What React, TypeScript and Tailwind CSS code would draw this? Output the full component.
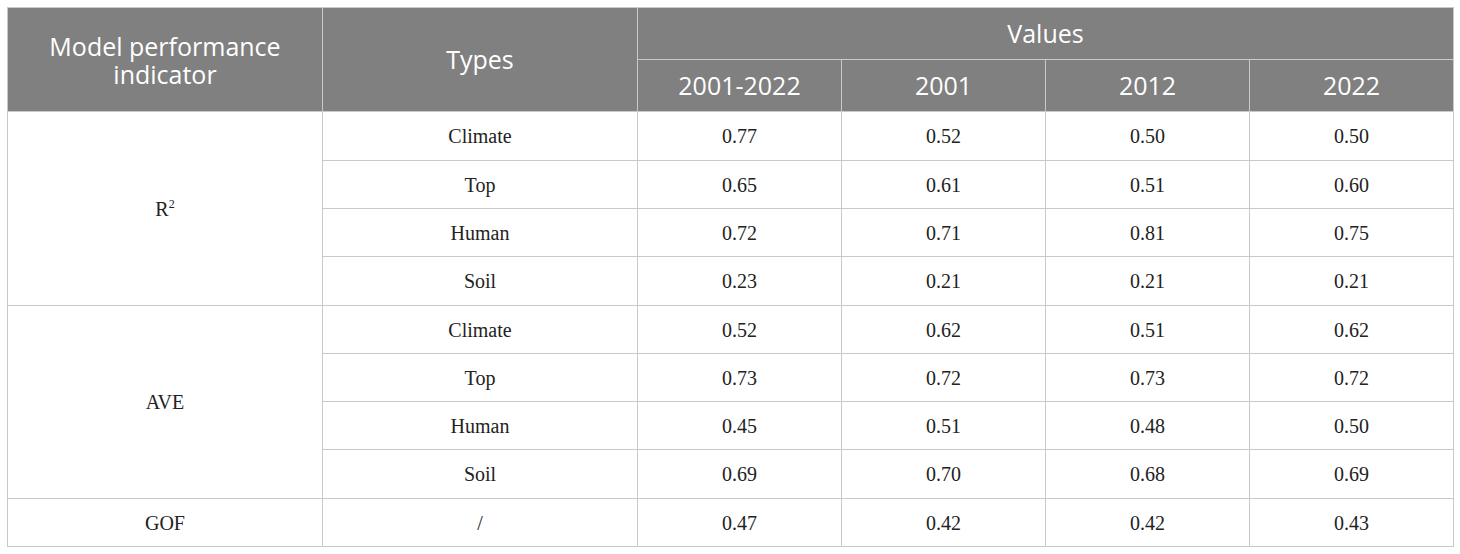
const head = "font-['Open_Sans',sans-serif] text-[25px] font-normal text-white";
const cell = "border border-[#c9c9c9] text-center align-middle";

const rows: { group: string; span: number; type: string; vals: string[]; h: string }[] = [
  { group: "R2", span: 4, type: "Climate", vals: ["0.77", "0.52", "0.50", "0.50"], h: "h-[49px]" },
  { group: "", span: 0, type: "Top", vals: ["0.65", "0.61", "0.51", "0.60"], h: "h-[48px]" },
  { group: "", span: 0, type: "Human", vals: ["0.72", "0.71", "0.81", "0.75"], h: "h-[48px]" },
  { group: "", span: 0, type: "Soil", vals: ["0.23", "0.21", "0.21", "0.21"], h: "h-[49px]" },
  { group: "AVE", span: 4, type: "Climate", vals: ["0.52", "0.62", "0.51", "0.62"], h: "h-[48px]" },
  { group: "", span: 0, type: "Top", vals: ["0.73", "0.72", "0.73", "0.72"], h: "h-[48px]" },
  { group: "", span: 0, type: "Human", vals: ["0.45", "0.51", "0.48", "0.50"], h: "h-[48px]" },
  { group: "", span: 0, type: "Soil", vals: ["0.69", "0.70", "0.68", "0.69"], h: "h-[49px]" },
  { group: "GOF", span: 1, type: "/", vals: ["0.47", "0.42", "0.42", "0.43"], h: "h-[48px]" },
];

export default function App() {
  return (
    <div className="min-h-screen bg-white pt-[7px] pl-[7px]">
      <table className="w-[1446px] table-fixed border-collapse font-['Liberation_Serif',serif] text-[20px] text-[#222]">
        <colgroup>
          <col className="w-[315px]" />
          <col className="w-[315px]" />
          <col className="w-[204px]" />
          <col className="w-[204px]" />
          <col className="w-[204px]" />
          <col className="w-[204px]" />
        </colgroup>
        <thead className="bg-[#7f807f]">
          <tr className="h-[52px]">
            <th rowSpan={2} className={`${cell} ${head} leading-[28px]`}>
              Model performance
              <br />
              indicator
            </th>
            <th rowSpan={2} className={`${cell} ${head}`}>Types</th>
            <th colSpan={4} className={`${cell} ${head}`}>Values</th>
          </tr>
          <tr className="h-[52px]">
            {["2001-2022", "2001", "2012", "2022"].map((y) => (
              <th key={y} className={`${cell} ${head}`}>{y}</th>
            ))}
          </tr>
        </thead>
        <tbody>
          {rows.map((r, i) => (
            <tr key={i} className={r.h}>
              {r.span > 0 && (
                <td rowSpan={r.span} className={cell}>
                  {r.group === "R2" ? (
                    <span>
                      R<sup className="text-[12px] relative -top-[8px]">2</sup>
                    </span>
                  ) : (
                    r.group
                  )}
                </td>
              )}
              <td className={cell}>{r.type}</td>
              {r.vals.map((v, j) => (
                <td key={j} className={cell}>{v}</td>
              ))}
            </tr>
          ))}
        </tbody>
      </table>
    </div>
  );
}
